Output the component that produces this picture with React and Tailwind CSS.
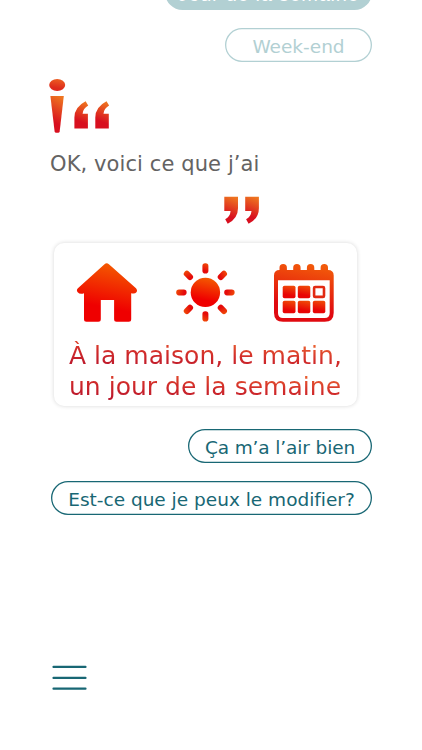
function Gradient({ id, from = "#ee7420", to = "#d8101f" }) {
  return (
    <linearGradient id={id} x1="0.6" y1="0" x2="0.4" y2="1">
      <stop offset="0" stopColor={from} />
      <stop offset="0.75" stopColor={to} />
    </linearGradient>
  );
}

function OpeningMark() {
  return (
    <svg
      width="62"
      height="56"
      viewBox="0 0 62 56"
      className="block overflow-visible"
    >
      <defs>
        <Gradient id="dot" from="#ec5f22" to="#de2a1c" />
        <Gradient id="open" />
      </defs>
      <ellipse cx="7.2" cy="6" rx="8" ry="6.1" fill="url(#dot)" />
      <g fill="url(#open)">
        <path d="M0.4 17h13.400l-4.100 35.200q-.2 1.500-1.600 1.500h-1.900q-1.400 0-1.600-1.500z" />
        <path d="M24.400 49.500V38.500Q24.400 28 35.600 22.200l2.600 4.400q-5.200 3-5.600 8.200h5.300v14.700z" />
        <path d="M45.300 49.500V38.500Q45.300 28 56.500 22.200l2.600 4.400q-5.200 3-5.600 8.200h5.300v14.700z" />
      </g>
    </svg>
  );
}

function ClosingMark() {
  return (
    <svg width="36" height="30" viewBox="0 0 36 30" className="block">
      <defs>
        <Gradient id="close" />
      </defs>
      <g fill="url(#close)">
        <path d="M0.300 0.700h13.700v11.500q0 10.300-10.300 15.500l-2.500-4.500q5-2.700 5.400-8.200H0.300z" />
        <path d="M21.200 0.700h13.700v11.500q0 10.300-10.300 15.500l-2.500-4.500q5-2.700 5.400-8.200h-6.300z" />
      </g>
    </svg>
  );
}

function HouseIcon() {
  return (
    <svg width="62" height="60" viewBox="0 0 62 60" className="block">
      <defs>
        <Gradient id="house" from="#f45a00" to="#ef0000" />
      </defs>
      <path
        fill="url(#house)"
        d="M28.500 1.200q2.200-1.800 4.400 0L60 25.200q1.800 2 .4 4-1.600 2.200-5.200 1V56.300q0 2.500-2.500 2.500H40.600q-2.500 0-2.500-2.500V37H24.800v19.300q0 2.500-2.500 2.500H10.500q-2.500 0-2.500-2.500V30.200q-4.200 1.400-6.300-1-1.700-2 .2-4z"
      />
    </svg>
  );
}

function SunIcon() {
  return (
    <svg width="60" height="60" viewBox="0 0 60 60" className="block">
      <defs>
        <Gradient id="sun" from="#f45a00" to="#ef0000" />
        <Gradient id="ray" from="#f04a08" to="#e50a0a" />
      </defs>
      <circle cx="29.4" cy="29.4" r="14.7" fill="url(#sun)" />
      {[0, 45, 90, 135, 180, 225, 270, 315].map((angle) => (
        <rect
          key={angle}
          x="26.4"
          y="0.2"
          width="6"
          height="10.4"
          rx="2.8"
          fill="url(#ray)"
          transform={`rotate(${angle} 29.4 29.4)`}
        />
      ))}
    </svg>
  );
}

function CalendarIcon() {
  return (
    <svg width="60" height="60" viewBox="0 0 60 60" className="block">
      <defs>
        <Gradient id="calendar" from="#f25a0a" to="#e00a10" />
        <Gradient id="day" from="#f04a08" to="#e80505" />
      </defs>
      <path
        fill="url(#calendar)"
        fillRule="evenodd"
        d="M5.500 7V4.800a3.700 3.700 0 0 1 7.400 0V7h6.300V4.800a3.700 3.700 0 0 1 7.400 0V7h6.300V4.800a3.700 3.700 0 0 1 7.400 0V7h6.300V4.800a3.700 3.700 0 0 1 7.400 0V7q5.700 0 5.700 5.500v37.300q0 9-9 9H9q-9 0-9-9V12.500q0-5.500 5.500-5.500zM4 17.300V50q0 5 5 5h41.700q5 0 5-5V17.300z"
      />
      <g fill="url(#day)">
        <rect x="8.7" y="22.7" width="12.8" height="12.5" rx="1.8" />
        <rect x="23.8" y="22.7" width="12.5" height="12.5" rx="1.8" />
        <rect x="8.7" y="37.7" width="12.8" height="12.5" rx="1.8" />
        <rect x="23.8" y="37.7" width="12.5" height="12.5" rx="1.8" />
        <rect x="38.8" y="37.7" width="12.5" height="12.5" rx="1.8" />
      </g>
      <rect
        x="40.1"
        y="24"
        width="9.9"
        height="9.9"
        rx="1"
        fill="none"
        stroke="#e22a12"
        strokeWidth="2.6"
      />
    </svg>
  );
}

function MenuIcon() {
  return (
    <svg
      width="36"
      height="26"
      viewBox="0 0 36 26"
      stroke="#186774"
      strokeWidth="2.2"
      strokeLinecap="round"
      className="block"
    >
      <path d="M2.500 1.900h32M2.500 12.900h32M2.500 23.700h32" />
    </svg>
  );
}

function Reply({ className, children }) {
  return (
    <button
      className={`flex h-[34px] items-center justify-center self-end rounded-full pt-[4px] text-[18.5px] leading-none whitespace-nowrap ${className}`}
    >
      {children}
    </button>
  );
}

function SummaryLine({ children }) {
  return (
    <span className="block w-[276px] bg-linear-[183deg] from-[#ea6030] from-15% via-[#d22c2a] via-50% to-[#b9152c] to-90% bg-clip-text text-transparent">
      {children}
    </span>
  );
}

export default function App() {
  return (
    <main className="h-[750px] w-[422px] overflow-hidden bg-white pr-[50px] pl-[51px] font-['DejaVu_Sans',sans-serif] [font-variant-ligatures:none]">
      <div className="flex flex-col">
        <div className="-mt-[25px] flex h-[35px] w-[207px] items-center justify-center self-end rounded-full bg-[#b2d0d3] pt-[3px] font-['Liberation_Sans',sans-serif] text-[20px] leading-[20px] tracking-[0.7px] whitespace-nowrap text-white">
          Jour de la semaine
        </div>
        <Reply className="mt-[18px] w-[147px] text-[#b2d0d3] shadow-[inset_0_0_0_1.3px_#b2d0d3]">
          Week-end
        </Reply>
      </div>

      <div className="mt-[17px] -ml-px">
        <OpeningMark />
      </div>
      <p className="mt-[14px] -ml-px h-[30px] text-[21px] leading-[30px] tracking-[0.1px] whitespace-nowrap text-[#646363]">
        OK, voici ce que j’ai
      </p>
      <div className="mt-[17px] ml-[173px]">
        <ClosingMark />
      </div>

      <section className="mt-[17px] ml-[3px] h-[163px] w-[303px] rounded-[10px] bg-white shadow-[0_0_4px_rgba(0,0,0,0.16)]">
        <div className="flex pt-[20px] pl-[22px]">
          <HouseIcon />
          <div className="ml-[38px]">
            <SunIcon />
          </div>
          <div className="ml-[38px]">
            <CalendarIcon />
          </div>
        </div>
        <p className="mt-[17px] ml-[15px] text-[25px] leading-[31px] tracking-[0.02px] whitespace-nowrap">
          <SummaryLine>À la maison, le matin,</SummaryLine>
          <SummaryLine>un jour de la semaine</SummaryLine>
        </p>
      </section>

      <div className="mt-[23px] flex flex-col gap-[18px]">
        <Reply className="w-[184px] tracking-[-0.12px] text-[#186774] shadow-[inset_0_0_0_1.3px_#186774]">
          Ça m’a l’air bien
        </Reply>
        <Reply className="w-[321px] text-[#186774] shadow-[inset_0_0_0_1.3px_#186774]">
          Est-ce que je peux le modifier?
        </Reply>
      </div>

      <button className="mt-[150px] block">
        <MenuIcon />
      </button>
    </main>
  );
}
